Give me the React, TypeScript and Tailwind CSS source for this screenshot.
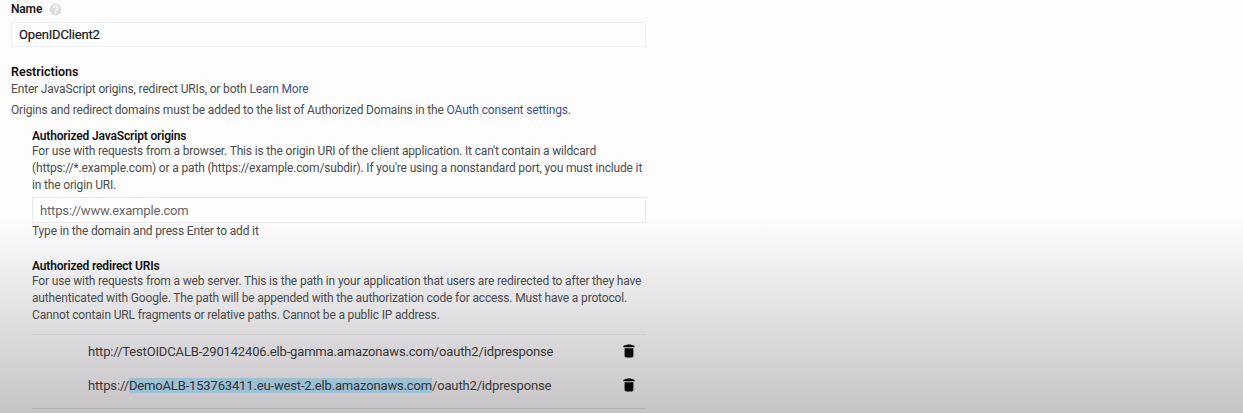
import type { ReactNode } from 'react';

function Link({ children }: { children: ReactNode }) {
  return (
    <a href="#" className="text-[#3c5488]">
      {children}
    </a>
  );
}

function HelpIcon() {
  return (
    <svg width="13" height="13" viewBox="0 0 13 13" className="shrink-0">
      <circle cx="6.5" cy="6.5" r="6" fill="#dedede" />
      <path d="M4.5 5.1a2 2 0 1 1 3 1.7c-.7.4-1 .7-1 1.4" fill="none" stroke="#fff" strokeWidth="1.4" />
      <circle cx="6.5" cy="9.9" r=".85" fill="#fff" />
    </svg>
  );
}

function TrashIcon() {
  return (
    <svg width="12" height="14" viewBox="0 0 12 14" className="shrink-0" fill="#080808">
      <path d="M.4 2.2q0-.7.8-.8L3.4 1.1 4.2.4h3.6l.8.7 2.2.3q.8.1.8.8v1H.4z" />
      <path d="M1.6 4.3h8.8v7.4a1.7 1.7 0 0 1-1.7 1.7H3.3a1.7 1.7 0 0 1-1.7-1.7z" />
    </svg>
  );
}

function UriRow({ children }: { children: ReactNode }) {
  return (
    <div className="flex h-[34px] items-center justify-between pl-14 pr-[11px] text-[13px] tracking-[-0.155px] text-[#383838]">
      <span>{children}</span>
      <button type="button" aria-label="Delete">
        <TrashIcon />
      </button>
    </div>
  );
}

export default function App() {
  return (
    <main className="h-[413px] w-full overflow-hidden whitespace-nowrap bg-[#fefdfe] bg-[linear-gradient(to_bottom,#fefdfe_218px,#f8f7f9_235px,#e5e4e6_300px,#d3d1d3_365px,#c6c4c6_413px)] font-['Roboto',sans-serif] text-[12px] leading-[17px] tracking-[-0.16px] text-[#4c4c4c]">
      <div className="ml-[11px] w-[635px]">
        <div className="flex h-[18px] items-center gap-[7px]">
          <span className="font-semibold text-[#181818]">Name</span>
          <HelpIcon />
        </div>
        <div className="mt-1 flex h-[25px] items-center border border-[#efeef1] bg-[#fffeff] pl-[7px] text-[13px] text-[#181818] [-webkit-text-stroke:0.2px_#181818]">
          OpenIDClient2
        </div>
        <h2 className="mt-4 text-[12.5px] font-semibold tracking-normal text-[#111]">Restrictions</h2>
        <p className="mt-px">
          Enter JavaScript origins, redirect URIs, or both <Link>Learn More</Link>
        </p>
        <p className="mt-1">
          Origins and redirect domains must be added to the list of Authorized Domains in the{' '}
          <Link>OAuth consent settings.</Link>
        </p>

        <section className="ml-[21px] mt-[9px]">
          <h3 className="h-[15px] font-semibold text-[#111]">Authorized JavaScript origins</h3>
          <p>For use with requests from a browser. This is the origin URI of the client application. It can't contain a wildcard</p>
          <p>(https://*.example.com) or a path (https://example.com/subdir). If you're using a nonstandard port, you must include it</p>
          <p>in the origin URI.</p>
          <div className="mt-[3px] flex h-[26px] items-center border border-[#e9e8ea] bg-[#fffeff] pl-[7px] text-[13px] text-[#666]">
            https://www.example.com
          </div>
          <p>Type in the domain and press Enter to add it</p>
        </section>

        <section className="ml-[21px] mt-[18px]">
          <h3 className="h-[15px] font-semibold text-[#111]">Authorized redirect URIs</h3>
          <p>For use with requests from a web server. This is the path in your application that users are redirected to after they have</p>
          <p>authenticated with Google. The path will be appended with the authorization code for access. Must have a protocol.</p>
          <p>Cannot contain URL fragments or relative paths. Cannot be a public IP address.</p>
          <div className="mt-[10px] border-t border-[#cfced0]">
            <div className="-mt-px">
              <UriRow>http://TestOIDCALB-290142406.elb-gamma.amazonaws.com/oauth2/idpresponse</UriRow>
              <UriRow>
                https://
                <mark className="bg-[#9fc0d2] text-[#26343d]">DemoALB-153763411.eu-west-2.elb.amazonaws.com</mark>
                /oauth2/idpresponse
              </UriRow>
            </div>
            <div className="mt-[6px] h-px bg-[#b2b0b2]" />
          </div>
        </section>
      </div>
    </main>
  );
}
